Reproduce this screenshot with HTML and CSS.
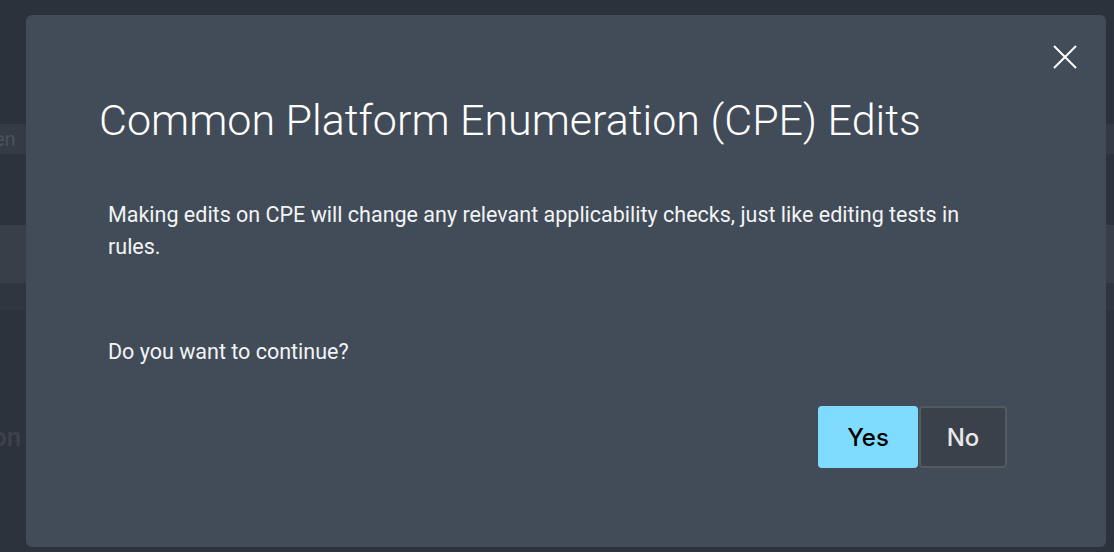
FILE: index.html
```html
<!DOCTYPE html>
<html lang="en">
  <head>
    <meta charset="UTF-8" />
    <meta name="viewport" content="width=device-width, initial-scale=1.0" />
    <title>CPE Edits</title>
    <link rel="stylesheet" href="styles.css">
  </head>
  <body>
    <div class="page">
      <div class="page-gap page-gap-top"></div>
      <div class="page-field"><span>en</span></div>
      <div class="page-gap page-gap-mid"></div>
      <div class="page-row"></div>
      <div class="page-strip"></div>
      <div class="page-heading"><span>on</span></div>
    </div>

    <div class="overlay">
      <div class="modal" role="dialog" aria-labelledby="modal-title">
        <button class="modal-close" aria-label="Close">
          <svg width="24" height="24" viewBox="0 0 24 24">
            <path d="M1 1 L23 23 M23 1 L1 23" stroke="#fff" stroke-width="2" fill="none" />
          </svg>
        </button>
        <h1 id="modal-title" class="modal-title">Common Platform Enumeration (CPE) Edits</h1>
        <p class="modal-text">
          Making edits on CPE will change any relevant applicability checks, just like editing tests in
          rules.
        </p>
        <p class="modal-text modal-question">Do you want to continue?</p>
        <div class="modal-actions">
          <button class="btn btn-yes">Yes</button>
          <button class="btn btn-no">No</button>
        </div>
      </div>
    </div>
  </body>
</html>
```

FILE: styles.css
```css
html,
body {
  height: 100%;
  margin: 0;
  padding: 0;
  overflow: hidden;
}

body {
  background: #2d333c;
  font-family: Roboto, "Liberation Sans", sans-serif;
}

/* page underneath the dialog */
.page {
  display: flex;
  flex-direction: column;
  height: 100%;
}

.page-gap-top {
  height: 124px;
  background: #2c323b;
}

.page-field {
  height: 30px;
  background: #353b44;
  display: flex;
  align-items: center;
  margin-left: -6px;
  font-size: 20px;
  color: #4b525b;
}

.page-gap-mid {
  height: 71px;
}

.page-row {
  height: 58px;
  background: #393f48;
}

.page-strip {
  height: 27px;
  background: #30363f;
}

.page-heading {
  padding-top: 112px;
  margin-left: -8px;
  font-size: 26px;
  font-weight: 500;
  color: #3c424b;
}

/* dialog */
.overlay {
  position: fixed;
  inset: 0;
  display: flex;
  padding: 15px 8px 5px 26px;
}

.modal {
  position: relative;
  flex: 1;
  background: #424c58;
  border-radius: 6px;
  padding: 0 72px 0 73px;
  display: flex;
  flex-direction: column;
  color: #fff;
}

.modal-close {
  position: absolute;
  top: 30px;
  right: 29px;
  width: 24px;
  height: 24px;
  padding: 0;
  border: 0;
  background: none;
  cursor: pointer;
}

.modal-close svg {
  display: block;
}

.modal-title {
  margin: 0;
  padding-top: 79px;
  font-size: 43px;
  font-weight: 300;
  line-height: 52px;
  letter-spacing: 0;
}

.modal-text {
  margin: 53px 34px 0 9px;
  font-size: 21.5px;
  line-height: 32px;
  color: #f2f4f6;
}

.modal-question {
  margin-top: 73px;
}

.modal-actions {
  display: flex;
  justify-content: flex-end;
  gap: 1px;
  margin-top: 38px;
  padding-right: 27px;
}

.btn {
  height: 62px;
  border-radius: 4px;
  font-family: Inter, Roboto, sans-serif;
  font-size: 24px;
  font-weight: 500;
  cursor: pointer;
}

.btn-yes {
  width: 100px;
  border: 0;
  background: #80dcff;
  color: #000;
}

.btn-no {
  width: 88px;
  border: 2px solid #535a62;
  background: #3a414a;
  color: #e8e8e8;
}
```
